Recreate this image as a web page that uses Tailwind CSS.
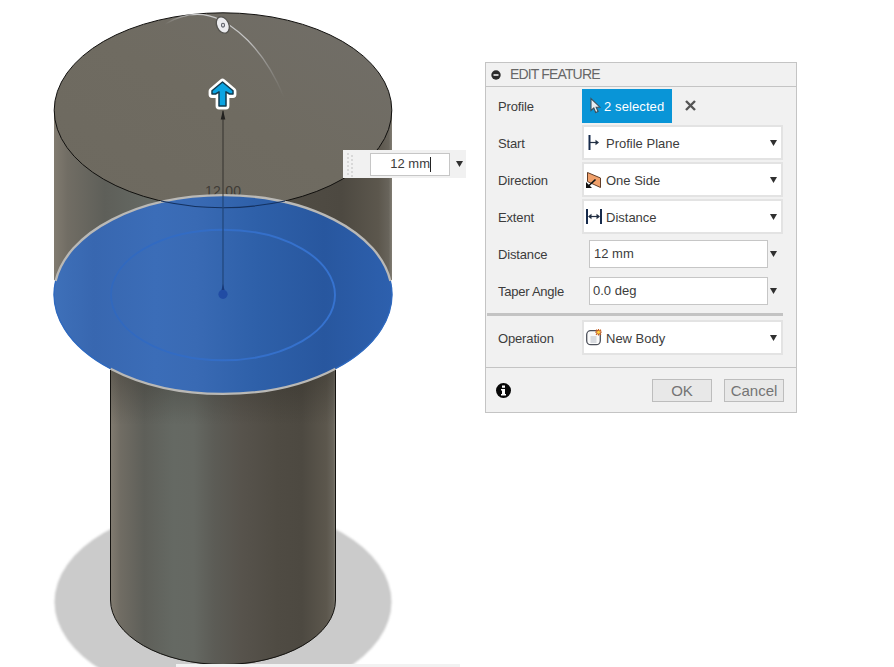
<!DOCTYPE html>
<html lang="en">
<head>
<meta charset="utf-8">
<title>Edit Feature</title>
<script src="https://cdn.jsdelivr.net/npm/@tailwindcss/browser@4"></script>
</head>
<body class="relative h-[667px] w-[894px] overflow-hidden bg-white font-['Liberation_Sans',Arial,sans-serif] text-[13px] text-[#3c3c3c]">
<main class="flex h-full items-start">
  <!-- Model viewport -->
  <svg class="block h-[667px] w-[485px] shrink-0" viewBox="0 0 485 667">
    <defs>
      <linearGradient id="side" x1="0" x2="1" y1="0" y2="0">
        <stop offset="0" stop-color="#817b70"/><stop offset=".04" stop-color="#716d64"/><stop offset=".15" stop-color="#5e5f59"/><stop offset=".28" stop-color="#656963"/><stop offset=".37" stop-color="#656862"/><stop offset=".46" stop-color="#5c5c56"/><stop offset=".58" stop-color="#57534c"/><stop offset=".74" stop-color="#4f4b43"/><stop offset=".85" stop-color="#4d4941"/><stop offset=".96" stop-color="#5c574d"/><stop offset=".99" stop-color="#68645b"/><stop offset="1" stop-color="#817d73"/>
      </linearGradient>
      <linearGradient id="face" x1="0" x2="1" y1="1" y2="0">
        <stop offset="0" stop-color="#6d695f"/><stop offset=".5" stop-color="#6f6b61"/><stop offset="1" stop-color="#716e68"/>
      </linearGradient>
      <linearGradient id="blue" x1="0" x2="1" y1="0" y2="0">
        <stop offset="0" stop-color="#3e70b9"/><stop offset=".12" stop-color="#3867b0"/><stop offset=".3" stop-color="#3b6db8"/><stop offset=".42" stop-color="#396ab4"/><stop offset=".6" stop-color="#2e60a9"/><stop offset=".8" stop-color="#28579f"/><stop offset="1" stop-color="#2d60ae"/>
      </linearGradient>
      <linearGradient id="under" x1="0" x2="0" y1="370" y2="425" gradientUnits="userSpaceOnUse">
        <stop offset="0" stop-color="#25231e" stop-opacity=".35"/><stop offset="1" stop-color="#25231e" stop-opacity="0"/>
      </linearGradient>
      <linearGradient id="inner" x1="0" x2="1" y1="0" y2="0">
        <stop offset="0" stop-color="#3168bd"/><stop offset="1" stop-color="#3673d0"/>
      </linearGradient>
      <linearGradient id="arc" x1="165" x2="284" y1="0" y2="0" gradientUnits="userSpaceOnUse">
        <stop offset="0" stop-color="#ccc" stop-opacity="0"/><stop offset=".25" stop-color="#ccc"/><stop offset=".7" stop-color="#c4c4c4"/><stop offset="1" stop-color="#aaa" stop-opacity="0"/>
      </linearGradient>
      <filter id="soft"><feGaussianBlur stdDeviation=".8"/></filter>
    </defs>
    <ellipse cx="223" cy="602" rx="168.500" ry="98" fill="#cbcbcb" filter="url(#soft)"/>
    <path d="M110.500 340V600A112.500 65 0 0 0 335.500 600V340Z" fill="url(#side)"/>
    <path d="M110 355H336V425H110Z" fill="url(#under)"/>
    <path d="M110.500 370V600A112.500 64.500 0 0 0 335.500 600V370" fill="none" stroke="#141310"/>
    <path d="M54 110V280H392V110Z" fill="url(#side)"/>
    <ellipse cx="223" cy="110.300" rx="168.800" ry="97.500" fill="url(#face)" stroke="#11100e"/>
    <text x="223" y="196" text-anchor="middle" font-size="14" textLength="36" fill="#3f3c37">12.00</text>
    <ellipse cx="223" cy="294.500" rx="169.300" ry="99.700" fill="url(#blue)"/>
    <path d="M55.600 281A169 99.500 0 0 1 390.400 281M110.500 368.700A169 99.500 0 0 0 335.500 368.700" fill="none" stroke="#bab9b6" stroke-width="2.300"/>
    <path d="M55.600 281A169 99.500 0 0 0 110.500 368.700M390.400 281A169 99.500 0 0 1 335.500 368.700" fill="none" stroke="#2e69bf" stroke-width="1.300"/>
    <ellipse cx="223" cy="295" rx="112" ry="65.300" fill="none" stroke="url(#inner)" stroke-width="1.900"/>
    <path d="M161 201Q223 214.500 285 201" fill="none" stroke="#14315f" stroke-width="1.100"/>
    <path d="M223 111V196" stroke="#34322e"/>
    <path d="M223 196V293" stroke="#214579" stroke-width="1.200"/>
    <path d="M223 110L220.700 119.500H225.300Z" fill="#22211f"/>
    <circle cx="223" cy="294.300" r="4.600" fill="#214ca4"/>
    <path d="M223 284l-1.500 6h3z" fill="#17397a"/>
    <path d="M165 24Q194 7 221 20Q261 42 284 97" fill="none" stroke="url(#arc)" stroke-width="1.300"/>
    <ellipse cx="222.800" cy="25" rx="6" ry="8.600" transform="rotate(-25 222.800 25)" fill="#ececef" stroke="#54534f" stroke-width="1.300"/>
    <ellipse cx="223" cy="25.200" rx="1.500" ry="1.900" fill="#ececef" stroke="#5b5d66" stroke-width="1.100"/>
    <path d="M222.500 82L212 91V94.500H215L219 92.500V106H226V92.500L230 94.500H233V91Z" fill="#fff" stroke="#fff" stroke-width="6.800" stroke-linejoin="round"/>
    <path d="M222.500 82L212 90.800V94H215.500L219 91.800V106H226V91.800L229.500 94H233V90.800Z" fill="#0ba4e2" stroke="#123b50" stroke-width="1.500" stroke-linejoin="round"/>
    <path d="M176 664H460V667H176Z" fill="#f2f2f2"/>
  </svg>

  <!-- Feature panel -->
  <section class="mt-[62px] flex h-[351px] w-[312px] shrink-0 flex-col border border-[#c4c4c4] bg-[#f1f1f1]">
    <header class="flex h-6 shrink-0 items-center gap-[9px] border-b border-[#c4c4c4] pl-[5px] text-[14px] text-[#676767]">
      <svg class="size-[10px]" viewBox="0 0 10 10"><circle cx="5" cy="5" r="4.700" fill="#2b2b2b"/><path d="M2.500 5H7.500" stroke="#fff" stroke-width="1.500"/></svg>
      <h1 class="tracking-[-0.85px]">EDIT FEATURE</h1>
    </header>
    <div class="grid auto-rows-[37px] grid-cols-[84px_201px] items-center pl-3">
      <span class="pt-[2px] tracking-[-0.15px]">Profile</span>
      <div class="flex items-center gap-[13px]">
        <button class="flex h-[34px] w-[90px] items-center gap-[3px] bg-[#0995d7] pl-2 text-white">
          <svg class="h-[18px] w-[11px] shrink-0" viewBox="0 0 11 18"><path d="M1 1.500V13.500L3.800 11L5.700 15.500L8.100 14.500L6.200 10.200H10Z" fill="#e7eef2" stroke="#3b4f5b" stroke-width="1.100"/></svg>
          <span class="whitespace-nowrap pt-[2px] tracking-[0.1px]">2 selected</span>
        </button>
        <svg class="size-[11px]" viewBox="0 0 11 11"><path d="M1 1L10 10M10 1L1 10" stroke="#555" stroke-width="2.400"/></svg>
      </div>

      <span class="pt-[2px] tracking-[-0.15px]">Start</span>
      <div class="flex h-[35px] items-center border-2 border-[#e3e3e3] bg-white pl-[2px] pr-1">
        <svg class="size-4" viewBox="0 0 16 16"><path d="M3.500 0V15" stroke="#172b4c" stroke-width="2"/><path d="M4 7.500H12" stroke="#222f43" stroke-width="1.200"/><path d="M9.500 4.800L13 7.500L9.500 10.200Z" fill="#222f43"/></svg>
        <span class="ml-1 flex-1 pt-[2px]">Profile Plane</span>
        <svg class="h-[6px] w-[7px]" viewBox="0 0 7 6"><path d="M0 0H7L3.500 6Z" fill="#303030"/></svg>
      </div>

      <span class="pt-[2px] tracking-[-0.15px]">Direction</span>
      <div class="flex h-[35px] items-center border-2 border-[#e3e3e3] bg-white pl-[2px] pr-1">
        <svg class="size-4" viewBox="0 0 16 16"><path d="M1.500 .5L14.500 6V15.500L1.500 9.500Z" fill="#f0a06a" stroke="#613d27"/><path d="M2.500 14L9.500 7.500" stroke="#111" stroke-width="1.700"/><path d="M0 10V16H6Z" fill="#111"/></svg>
        <span class="ml-1 flex-1 pt-[2px]">One Side</span>
        <svg class="h-[6px] w-[7px]" viewBox="0 0 7 6"><path d="M0 0H7L3.500 6Z" fill="#303030"/></svg>
      </div>

      <span class="pt-[2px] tracking-[-0.15px]">Extent</span>
      <div class="flex h-[35px] items-center border-2 border-[#e3e3e3] bg-white pl-[2px] pr-1">
        <svg class="size-4" viewBox="0 0 16 16"><path d="M1 0V15M15 0V15" stroke="#172b4c" stroke-width="2"/><path d="M3 7.500H13" stroke="#222f43" stroke-width="1.200"/><path d="M5.500 4.700L2 7.500L5.500 10.300ZM10.500 4.700L14 7.500L10.500 10.300Z" fill="#222f43"/></svg>
        <span class="ml-1 flex-1 pt-[2px]">Distance</span>
        <svg class="h-[6px] w-[7px]" viewBox="0 0 7 6"><path d="M0 0H7L3.500 6Z" fill="#303030"/></svg>
      </div>

      <span class="pt-[2px] tracking-[-0.15px]">Distance</span>
      <div class="flex items-center pl-[7px]">
        <div class="flex h-7 w-[179px] items-center border border-[#c6c6c6] bg-white pl-1">12 mm</div>
        <svg class="ml-[2px] h-[6px] w-[7px]" viewBox="0 0 7 6"><path d="M0 0H7L3.500 6Z" fill="#303030"/></svg>
      </div>

      <span class="whitespace-nowrap pt-[2px] tracking-[-0.25px]">Taper Angle</span>
      <div class="flex items-center pl-[7px]">
        <div class="flex h-7 w-[179px] items-center border border-[#c6c6c6] bg-white pl-[3px]">0.0 deg</div>
        <svg class="ml-[2px] h-[6px] w-[7px]" viewBox="0 0 7 6"><path d="M0 0H7L3.500 6Z" fill="#303030"/></svg>
      </div>
    </div>
    <div class="ml-px mt-[4px] h-[3px] w-[296px] shrink-0 bg-[#c3c3c3]"></div>
    <div class="mt-[3px] grid h-[37px] shrink-0 grid-cols-[84px_201px] items-center pl-3">
      <span class="pt-[2px] tracking-[-0.15px]">Operation</span>
      <div class="flex h-[35px] items-center border-2 border-[#e3e3e3] bg-white pl-[2px] pr-1">
        <svg class="size-4 overflow-visible" viewBox="0 0 16 16"><rect x=".7" y=".7" width="13.600" height="14" rx="4" fill="#fafafa" stroke="#4d515b" stroke-width="1.300"/><path d="M4.500 6H10.500V13H4.500Z" fill="#d8dbe0"/><path d="M12.500 -1V5.500M9.300 2.200H15.700M10 -.2L15 4.700M15 -.2L10 4.700" stroke="#c55b1c" stroke-width="1.200"/><circle cx="12.500" cy="2.200" r="1.500" fill="#ffd53f"/></svg>
        <span class="ml-1 flex-1 pt-[2px]">New Body</span>
        <svg class="h-[6px] w-[7px]" viewBox="0 0 7 6"><path d="M0 0H7L3.500 6Z" fill="#303030"/></svg>
      </div>
    </div>
    <footer class="mt-auto flex h-[45px] items-center gap-3 border-t border-[#c4c4c4] pl-[10px] pr-3 text-[15px] text-[#747474]">
      <svg class="mr-auto size-[15px]" viewBox="0 0 15 15"><circle cx="7.500" cy="7.500" r="7.500" fill="#080808"/><path d="M6 2.500H9V4.800H6ZM5 6H9V11H10V12.500H5V11H6V7.500H5Z" fill="#fff"/></svg>
      <button class="h-[23px] w-[60px] border border-[#bdbdbd] bg-[#e8e8e8] leading-[22px]">OK</button>
      <button class="h-[23px] w-[60px] border border-[#bdbdbd] bg-[#e8e8e8] leading-[22px]">Cancel</button>
    </footer>
  </section>
</main>

<!-- Floating distance input over the model -->
<div class="absolute left-[343px] top-[150px] flex h-7 w-[123px] items-center bg-[#f1f1f1]">
  <svg class="ml-[3px] h-[25px] w-2" viewBox="0 0 8 25"><path d="M2 1V25" stroke="#cfcfcf" stroke-width="1.500" stroke-dasharray="2 2"/><path d="M6 3V25" stroke="#cfcfcf" stroke-width="1.500" stroke-dasharray="2 2"/></svg>
  <div class="ml-4 flex h-[23px] w-20 items-center justify-end border border-[#c6c6c6] bg-white pr-[18px]"><span>12 mm</span><i class="h-[15px] w-px bg-[#222]"></i></div>
  <svg class="ml-[6px] h-[6px] w-[7px]" viewBox="0 0 7 6"><path d="M0 0H7L3.500 6Z" fill="#303030"/></svg>
</div>
</body>
</html>
